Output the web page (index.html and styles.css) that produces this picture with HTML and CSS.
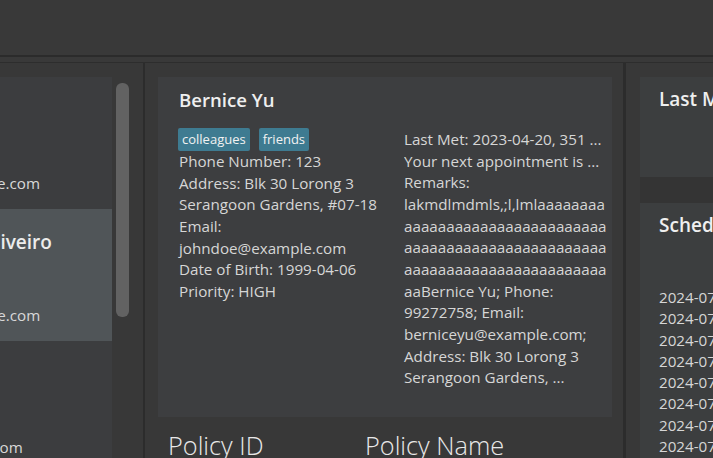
FILE: index.html
```html
<!DOCTYPE html>
<html lang="en">
<head>
<meta charset="utf-8">
<title>Address Book</title>
<link rel="stylesheet" href="styles.css">
</head>
<body>
<div class="app">
  <div class="topbar"></div>
  <div class="sep"></div>
  <div class="main">
    <section class="pane list-pane">
      <div class="list">
        <div class="cell even">
          <div class="cell-inner">
            <div class="cell-name">1. Alex Yeoh</div>
            <div class="cell-email">alexyeoh@example.com</div>
          </div>
        </div>
        <div class="cell odd">
          <div class="cell-inner">
            <div class="cell-name">3. Charlotte Oliveiro</div>
            <div class="cell-email">charlotte@example.com</div>
          </div>
        </div>
        <div class="cell even">
          <div class="cell-inner">
            <div class="cell-name">4. David Li</div>
            <div class="cell-email">lidavid@example.com</div>
          </div>
        </div>
      </div>
      <div class="scroll-track"><div class="scroll-thumb"></div></div>
    </section>
    <div class="divider"></div>
    <section class="pane detail-pane">
      <div class="detail-card">
        <div class="detail-name">Bernice Yu</div>
        <div class="detail-cols">
          <div class="detail-left">
            <div class="tags"><span class="tag">colleagues</span><span class="tag">friends</span></div>
            <div class="line">Phone Number: 123</div>
            <div class="line">Address: Blk 30 Lorong 3 Serangoon Gardens, #07-18</div>
            <div class="line">Email: johndoe@example.com</div>
            <div class="line">Date of Birth: 1999-04-06</div>
            <div class="line">Priority: HIGH</div>
          </div>
          <div class="detail-right">
            <div class="line clip">Last Met: 2023-04-20, 351 ...</div>
            <div class="line clip">Your next appointment is ...</div>
            <div class="line remarks">Remarks: lakmdlmdmls,;l,lmlaaaaaaaaaaaaaaaaaaaaaaaaaaaaaaaaaaaaaaaaaaaaaaaaaaaaaaaaaaaaaaaaaaaaaaaaaaaaaaaaaaBernice Yu; Phone: 99272758; Email: berniceyu@example.com; Address: Blk 30 Lorong 3 Serangoon Gardens, ...</div>
          </div>
        </div>
      </div>
      <div class="policy-head">
        <div class="policy-col id">Policy ID</div>
        <div class="policy-col">Policy Name</div>
      </div>
    </section>
    <div class="divider thick"></div>
    <section class="pane side-pane">
      <div class="side-card short">
        <div class="side-title">Last Met</div>
      </div>
      <div class="side-gap"></div>
      <div class="side-card">
        <div class="side-title">Schedule</div>
        <ul class="dates">
          <li>2024-07-15 10:00</li>
          <li>2024-07-16 11:30</li>
          <li>2024-07-17 09:00</li>
          <li>2024-07-18 14:00</li>
          <li>2024-07-19 16:30</li>
          <li>2024-07-20 10:15</li>
          <li>2024-07-22 13:45</li>
          <li>2024-07-23 15:00</li>
        </ul>
      </div>
    </section>
  </div>
</div>
</body>
</html>
```
FILE: styles.css
```css
* { box-sizing: border-box; }
html, body { margin: 0; padding: 0; }
body {
  width: 713px;
  height: 458px;
  overflow: hidden;
  background: #383838;
  font-family: "Open Sans", "Noto Sans", sans-serif;
  color: #d6d6d6;
}
.app { display: flex; flex-direction: column; height: 458px; }
.topbar { height: 55px; background: #393939; flex: none; }
.sep {
  flex: none;
  height: 8px;
  border-top: 2px solid #2b2b2b;
  border-bottom: 1px solid #2d2d2d;
  background: #393939;
}
.main {
  flex: 1;
  display: grid;
  grid-template-columns: 143px 2px 478px 3px 1fr;
  min-height: 0;
}
.pane { background: #383838; overflow: hidden; min-width: 0; }
.divider { background: #2c2c2c; }

/* list pane */
.list-pane {
  display: grid;
  grid-template-columns: 112px 13px;
  column-gap: 4px;
  padding-top: 14px;
}
.list { display: flex; flex-direction: column; overflow: hidden; }
.cell { height: 132px; flex: none; overflow: hidden; }
.cell.even { background: #3c3d3f; }
.cell.odd { background: #505558; }
.cell-inner { margin-left: -132px; white-space: nowrap; }
.cell-name {
  font-weight: 600;
  font-size: 19px;
  line-height: 26px;
  color: #ececec;
  padding-top: 20px;
}
.cell-email {
  font-size: 15.2px;
  line-height: 21px;
  margin-top: 50px;
  color: #d8d8d8;
}
.scroll-track { padding-top: 6px; }
.scroll-thumb { height: 234px; background: #626262; border-radius: 6px; }

/* detail pane */
.detail-pane { padding: 14px 11px 0 13px; }
.detail-card {
  height: 340px;
  background: #3d3e40;
  padding: 9px 5px 0 21px;
}
.detail-name {
  font-weight: 600;
  font-size: 18.6px;
  line-height: 27px;
  color: #efefef;
}
.detail-cols {
  margin-top: 15px;
  display: grid;
  grid-template-columns: 206px 203px;
  column-gap: 19px;
  font-size: 15.2px;
  line-height: 21.67px;
}
.tags { display: flex; gap: 9px; height: 23px; align-items: center; margin-left: -1px; }
.tag {
  background: #3e7b91;
  color: #f2f2f2;
  font-size: 13px;
  line-height: 19px;
  padding: 1px 4px;
  border-radius: 2px;
  height: 23px;
  display: inline-flex;
  align-items: center;
}
.detail-right { padding-top: 1px; }
.clip { white-space: nowrap; overflow: hidden; }
.remarks {
  overflow-wrap: break-word;
}
.policy-head {
  display: flex;
  padding-left: 10px;
  margin-top: 11px;
  font-weight: 300;
  font-size: 25.3px;
  color: #e8e8e8;
}
.policy-col.id { width: 197px; }

/* side pane */
.side-pane { padding: 14px 0 0 14px; display: flex; flex-direction: column; }
.side-card { background: #3c3e3f; padding: 9px 0 0 19px; flex: 1; white-space: nowrap; }
.side-card.short { flex: none; height: 100px; }
.side-gap { height: 26px; background: #343434; flex: none; }
.side-title { font-weight: 600; font-size: 19px; line-height: 27px; color: #efefef; }
.dates {
  list-style: none;
  margin: 48px 0 0;
  padding: 0;
  font-size: 15.2px;
  line-height: 21.3px;
  color: #d6d6d6;
}
```
